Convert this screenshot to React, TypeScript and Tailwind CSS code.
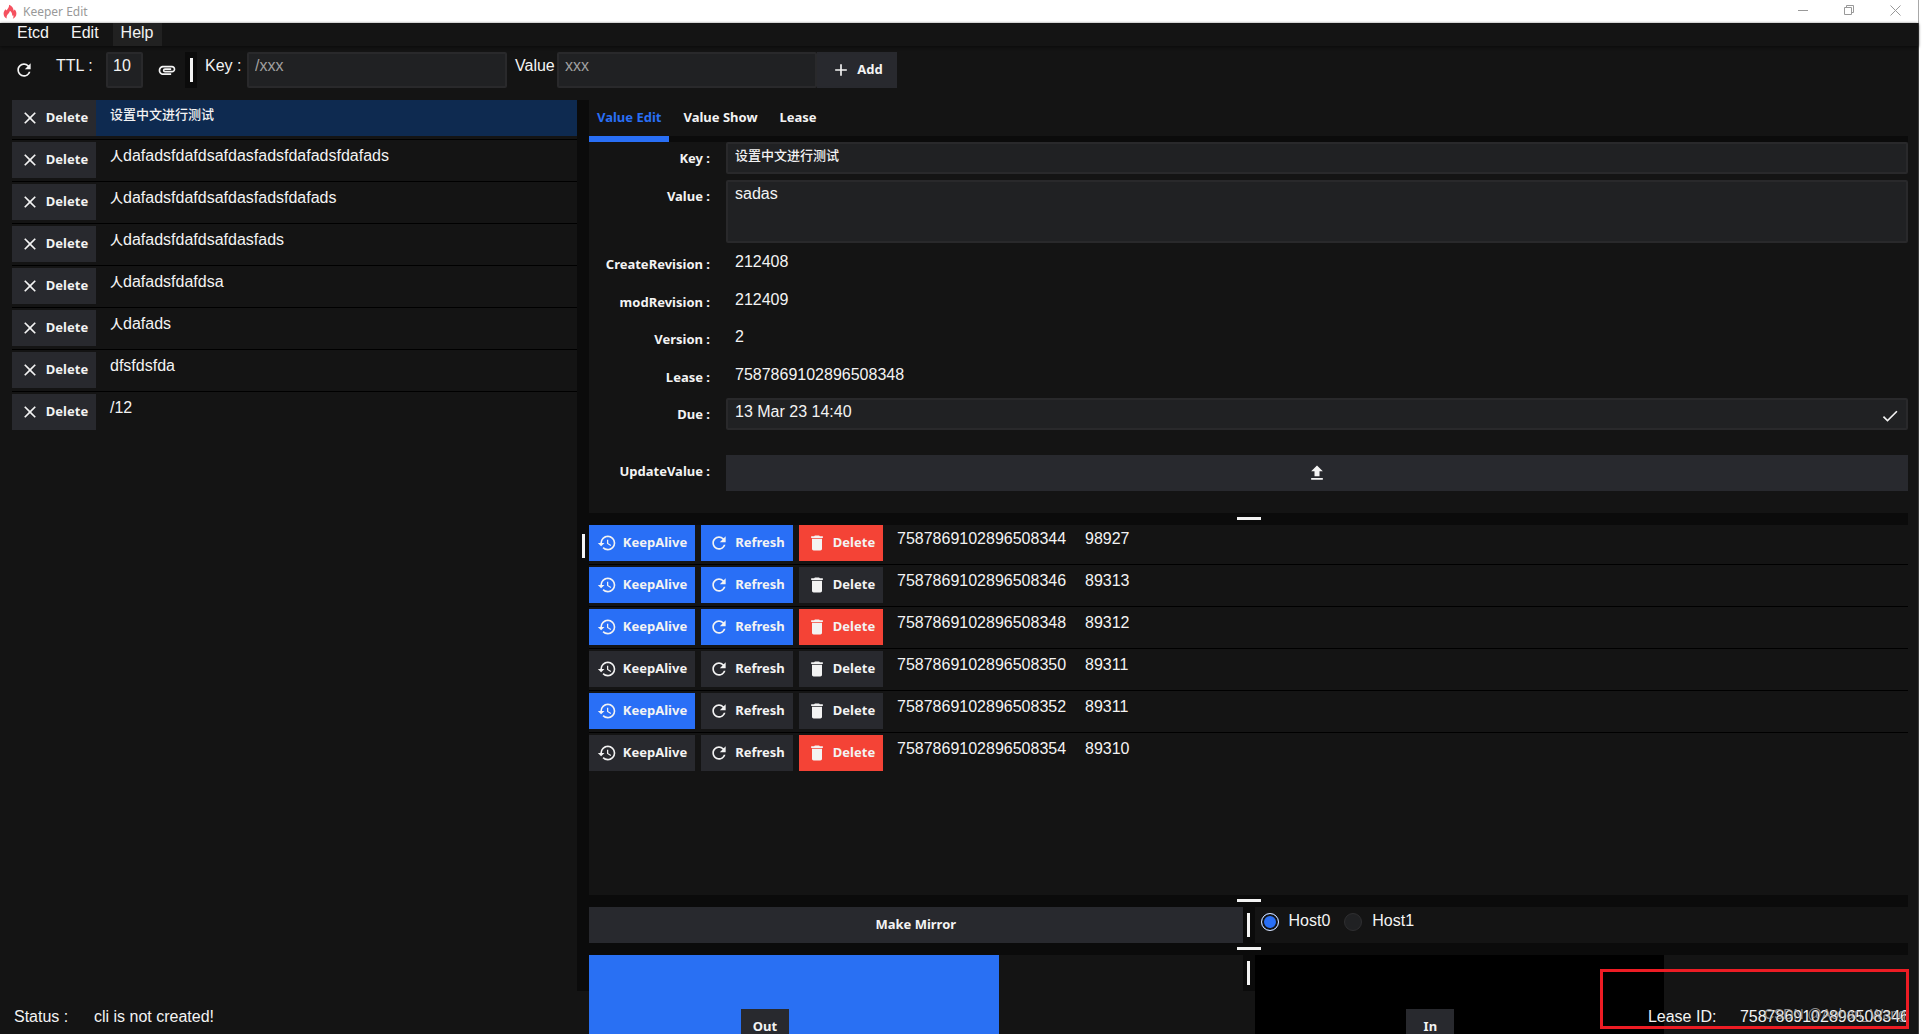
import React from "react";
import {
  MdAdd,
  MdAttachment,
  MdCheck,
  MdClear,
  MdDelete,
  MdHistory,
  MdRefresh,
} from "react-icons/md";

const keys = [
  "设置中文进行测试",
  "人dafadsfdafdsafdasfadsfdafadsfdafads",
  "人dafadsfdafdsafdasfadsfdafads",
  "人dafadsfdafdsafdasfads",
  "人dafadsfdafdsa",
  "人dafads",
  "dfsfdsfda",
  "/12",
];

const leases = [
  { id: "7587869102896508344", ttl: "98927", keep: true, refresh: true, del: true },
  { id: "7587869102896508346", ttl: "89313", keep: true, refresh: true, del: false },
  { id: "7587869102896508348", ttl: "89312", keep: true, refresh: true, del: true },
  { id: "7587869102896508350", ttl: "89311", keep: false, refresh: false, del: false },
  { id: "7587869102896508352", ttl: "89311", keep: true, refresh: false, del: false },
  { id: "7587869102896508354", ttl: "89310", keep: false, refresh: false, del: true },
];

const bold = "font-['Noto_Sans'] text-[13px] font-bold";
const field =
  "min-w-0 rounded-xs border-2 border-[#29292b] bg-[#202123] leading-5 text-[#f3f3f3] outline-none placeholder:text-[#a0a0a0]";

/* Splits the text so that Han characters are set a little smaller than Latin ones. */
function Mixed({ text }: { text: string }) {
  const parts = text.split(/([\u4e00-\u9fff]+)/).filter(Boolean);
  return (
    <>
      {parts.map((p, i) =>
        /[\u4e00-\u9fff]/.test(p) ? (
          <span key={i} className="font-['Noto_Sans_CJK_SC',sans-serif] text-[13px] leading-none font-medium">
            {p}
          </span>
        ) : (
          <span key={i}>{p}</span>
        ),
      )}
    </>
  );
}

function Btn({
  icon,
  label,
  tone,
  className,
}: {
  icon?: React.ReactNode;
  label: string;
  tone?: string;
  className?: string;
}) {
  return (
    <button
      type="button"
      className={`flex h-9 shrink-0 items-center justify-center gap-1.5 whitespace-nowrap ${bold} ${tone ?? "bg-[#28292e]"} ${className ?? ""}`}
    >
      {icon}
      {label}
    </button>
  );
}

function VSplit({ className }: { className?: string }) {
  return (
    <div className={`flex w-3 shrink-0 items-center justify-center bg-[#0b0b0b] ${className ?? ""}`}>
      <div className="h-6 w-[3px] bg-[#f3f3f3]" />
    </div>
  );
}

function HSplit() {
  return (
    <div className="flex h-3 shrink-0 items-start justify-center bg-[#0b0b0b] pt-1">
      <div className="h-[3px] w-6 bg-[#f3f3f3]" />
    </div>
  );
}

function Row({ label, htmlFor, children }: { label: string; htmlFor?: string; children: React.ReactNode }) {
  return (
    <div className="flex">
      <label htmlFor={htmlFor} className={`w-[137px] shrink-0 pr-4 text-right leading-8 ${bold}`}>
        <span className="leading-8">{label}</span>
      </label>
      {children}
    </div>
  );
}

function TitleBar() {
  return (
    <header className="flex h-[23px] shrink-0 items-center justify-between border-r border-[#a8a8a8] bg-white pr-[17px] pl-[3px] text-[#999999]">
      <div className="flex items-center gap-1.5">
        <svg width="14" height="16" viewBox="0 0 14 16" fill="#f5515f" aria-hidden="true">
          <path d="M6 0.8C6.2 2.6 5.6 3.8 4.6 5c-.4.4-.8.9-1 1.400L2.600 5.200C1.300 6.600.6 8.100.6 9.800c0 2.200 1.300 3.900 3.200 4.800-.6-2.100.1-3.500 1.500-4.900.9-.9 1.500-1.800 1.600-3 1.700 1.300 2.600 3.200 2.200 5.200l1-1c.6 1.500.4 2.800-.4 3.900 2.200-.9 3.700-2.700 3.700-5 0-1.600-.6-3-1.600-4.200l-1.200 1.200C10.700 4.200 9 2 6 .8z" />
        </svg>
        <span className="font-['Noto_Sans'] text-xs">Keeper Edit</span>
      </div>
      <div className="flex items-center gap-[35px] pb-[3px]">
        <button type="button" aria-label="Minimize">
          <svg width="11" height="11" viewBox="0 0 11 11" stroke="currentColor" fill="none">
            <path d="M0 5.500h10" />
          </svg>
        </button>
        <button type="button" aria-label="Restore">
          <svg width="11" height="11" viewBox="0 0 11 11" stroke="currentColor" fill="none">
            <path d="M.5 2.500h7v7h-7zM2.500 2.500v-2h7v7h-2" />
          </svg>
        </button>
        <button type="button" aria-label="Close">
          <svg width="11" height="11" viewBox="0 0 11 11" stroke="currentColor" fill="none">
            <path d="M.5.500l10 10M10.500.500l-10 10" />
          </svg>
        </button>
      </div>
    </header>
  );
}

function Toolbar() {
  return (
    <div className="flex h-9 shrink-0 items-start px-3">
      <button type="button" aria-label="Refresh" className="flex h-9 w-6 items-center justify-center">
        <MdRefresh size={20} />
      </button>
      <label htmlFor="ttl" className="w-[70px] pt-1 pl-5 leading-5">
        TTL :
      </label>
      <input id="ttl" defaultValue="10" className={`h-9 w-[37px] px-[5px] pb-2 ${field}`} />
      <button type="button" aria-label="Attach" className="flex h-9 w-[42px] items-center justify-center pl-1.5">
        <MdAttachment size={20} />
      </button>
      <VSplit className="h-9" />
      <label htmlFor="key" className="w-[50px] pt-1 pl-2 leading-5">
        Key :
      </label>
      <input id="key" placeholder="/xxx" className={`h-9 w-[260px] px-1.5 pb-2 ${field}`} />
      <label htmlFor="value" className="w-[50px] pt-1 pl-2 leading-5">
        Value
      </label>
      <input id="value" placeholder="xxx" className={`h-9 w-[260px] px-1.5 pb-2 ${field}`} />
      <Btn icon={<MdAdd size={20} />} label="Add" className="w-20" />
    </div>
  );
}

function KeyList() {
  return (
    <ul className="min-w-0 flex-[565]">
      {keys.map((k, i) => (
        <li key={k}>
          {i > 0 && <div className="mt-[3px] mb-[2px] h-px bg-black" />}
          <div className="flex h-9">
            <Btn icon={<MdClear size={20} />} label="Delete" className="w-[84px]" />
            <div className={`min-w-0 flex-1 truncate pt-1 pl-3.5 leading-5 ${i === 0 ? "bg-[#0e2a50]" : ""}`}>
              <Mixed text={k} />
            </div>
          </div>
        </li>
      ))}
    </ul>
  );
}

function ValueForm() {
  const stat = "h-8 pt-1 pl-[9px] leading-5";
  return (
    <section className="h-[413px] shrink-0">
      <div className={`flex h-[42px] gap-1.5 border-b-[6px] border-[#0b0b0b] ${bold}`} role="tablist">
        <button
          type="button"
          role="tab"
          aria-selected="true"
          className="-mb-1.5 h-[42px] border-b-[6px] border-[#296ff6] px-2 text-[#296ff6]"
        >
          Value Edit
        </button>
        <button type="button" role="tab" className="px-2">
          Value Show
        </button>
        <button type="button" role="tab" className="px-2">
          Lease
        </button>
      </div>
      <div className="flex h-72 flex-col justify-between">
        <Row label="Key :" htmlFor="f-key">
          <input
            id="f-key"
            defaultValue="设置中文进行测试"
            className={`h-8 flex-1 px-[7px] pb-2 ${field} font-['Noto_Sans_CJK_SC',sans-serif] text-[13px] font-medium`}
          />
        </Row>
        <Row label="Value :" htmlFor="f-value">
          <textarea
            id="f-value"
            defaultValue="sadas"
            className={`block h-[63px] flex-1 resize-none px-[7px] pt-0.5 ${field}`}
          />
        </Row>
        <Row label="CreateRevision :">
          <span className={stat}>212408</span>
        </Row>
        <Row label="modRevision :">
          <span className={stat}>212409</span>
        </Row>
        <Row label="Version :">
          <span className={stat}>2</span>
        </Row>
        <Row label="Lease :">
          <span className={stat}>7587869102896508348</span>
        </Row>
        <Row label="Due :" htmlFor="f-due">
          <div className="relative flex flex-1">
            <input id="f-due" defaultValue="13 Mar 23 14:40" className={`h-8 flex-1 px-[7px] pb-1 ${field}`} />
            <MdCheck size={20} className="absolute top-2 right-2" />
          </div>
        </Row>
      </div>
      <div className="mt-[25px]">
        <Row label="UpdateValue :">
          <button type="button" aria-label="Update value" className="flex h-9 flex-1 items-center justify-center bg-[#28292e]">
            <svg width="20" height="20" viewBox="0 0 24 24" fill="currentColor" aria-hidden="true">
              <path d="M9 16h6v-6h4l-7-7-7 7h4zm-4 2h14v2H5z" />
            </svg>
          </button>
        </Row>
      </div>
    </section>
  );
}

function LeaseList() {
  return (
    <ul className="min-h-0 flex-1 overflow-hidden">
      {leases.map((l, i) => (
        <li key={l.id}>
          {i > 0 && <div className="mt-[3px] mb-[2px] h-px bg-black" />}
          <div className="flex h-9 gap-1.5">
            <Btn
              icon={<MdHistory size={20} />}
              label="KeepAlive"
              tone={l.keep ? "bg-[#296ff6]" : "bg-[#28292e]"}
              className="w-[106px]"
            />
            <Btn
              icon={<MdRefresh size={20} />}
              label="Refresh"
              tone={l.refresh ? "bg-[#296ff6]" : "bg-[#28292e]"}
              className="w-[92px]"
            />
            <Btn
              icon={<MdDelete size={20} />}
              label="Delete"
              tone={l.del ? "bg-[#f44336]" : "bg-[#28292e]"}
              className="w-[84px]"
            />
            <span className="w-[182px] pt-1 pl-2 leading-5">{l.id}</span>
            <span className="pt-1 pl-2 leading-5">{l.ttl}</span>
          </div>
        </li>
      ))}
    </ul>
  );
}

function Host({ label, checked }: { label: string; checked?: boolean }) {
  return (
    <label className="flex h-9 items-start gap-2.5 leading-5">
      <input
        type="radio"
        name="host"
        defaultChecked={checked}
        className="mt-1.5 size-[18px] appearance-none rounded-full border border-[#2f2f31] bg-[#202123] checked:border-[#dbe6fb] checked:bg-[#296ff6] checked:shadow-[inset_0_0_0_2px_#141414]"
      />
      <span className="pt-1">{label}</span>
    </label>
  );
}

function Direction({ label, tone }: { label: string; tone: string }) {
  return (
    <div className="min-w-0 flex-1">
      <div className={`flex h-36 w-[62.7%] items-center justify-center pr-[58px] ${tone}`}>
        <Btn label={label} className="w-12" />
      </div>
    </div>
  );
}

function Mirror() {
  return (
    <>
      <div className="flex h-9 shrink-0">
        <div className="min-w-0 flex-1">
          <Btn label="Make Mirror" className="w-full" />
        </div>
        <VSplit />
        <div className="min-w-0 flex-1">
          <div className="flex gap-3.5 pl-1.5">
            <Host label="Host0" checked />
            <Host label="Host1" />
          </div>
        </div>
      </div>
      <HSplit />
      <div className="flex h-9 shrink-0">
        <Direction label="Out" tone="bg-[#2970f3]" />
        <VSplit />
        <Direction label="In" tone="bg-black" />
      </div>
    </>
  );
}

export default function App() {
  return (
    <div className="flex h-screen flex-col overflow-hidden bg-white pr-[3px] font-['Liberation_Sans',sans-serif] text-base text-[#f3f3f3]">
      <TitleBar />
      <div className="flex min-h-0 flex-1 flex-col border-r border-[#3c3c3c] bg-[#141414]">
        <nav className="flex h-[23px] shrink-0 gap-1.5 pl-[9px] leading-5 shadow-[0_1px_3px_#0a0a0a]">
          <button type="button" className="px-2 pb-[3px]">
            Etcd
          </button>
          <button type="button" className="px-2 pb-[3px]">
            Edit
          </button>
          <button type="button" className="bg-[#212121] px-2 pb-[3px]">
            Help
          </button>
        </nav>
        <div className="h-1.5 shrink-0" />
        <Toolbar />
        <main className="mt-3 flex min-h-0 flex-1 pr-2.5 pl-3">
          <KeyList />
          <VSplit />
          <div className="flex min-w-0 flex-[1319] flex-col">
            <ValueForm />
            <HSplit />
            <LeaseList />
            <HSplit />
            <Mirror />
          </div>
        </main>
        <footer className="relative flex h-[43px] shrink-0 justify-between pt-4 pr-[9px] pl-3.5 leading-5">
          <div className="flex">
            <span className="w-20">Status :</span>
            <span>cli is not created!</span>
          </div>
          <div className="flex">
            <span className="w-[92px]">Lease ID:</span>
            <span>7587869102896508346</span>
          </div>
          <span className="absolute right-3 bottom-2.5 text-sm leading-5 text-[#b0b0b0]/80">CSDN @Aohan_Wang</span>
          <div className="absolute right-[9px] bottom-[5px] h-[60px] w-[309px] border-[3px] border-[#ed1c24]" />
        </footer>
      </div>
    </div>
  );
}
